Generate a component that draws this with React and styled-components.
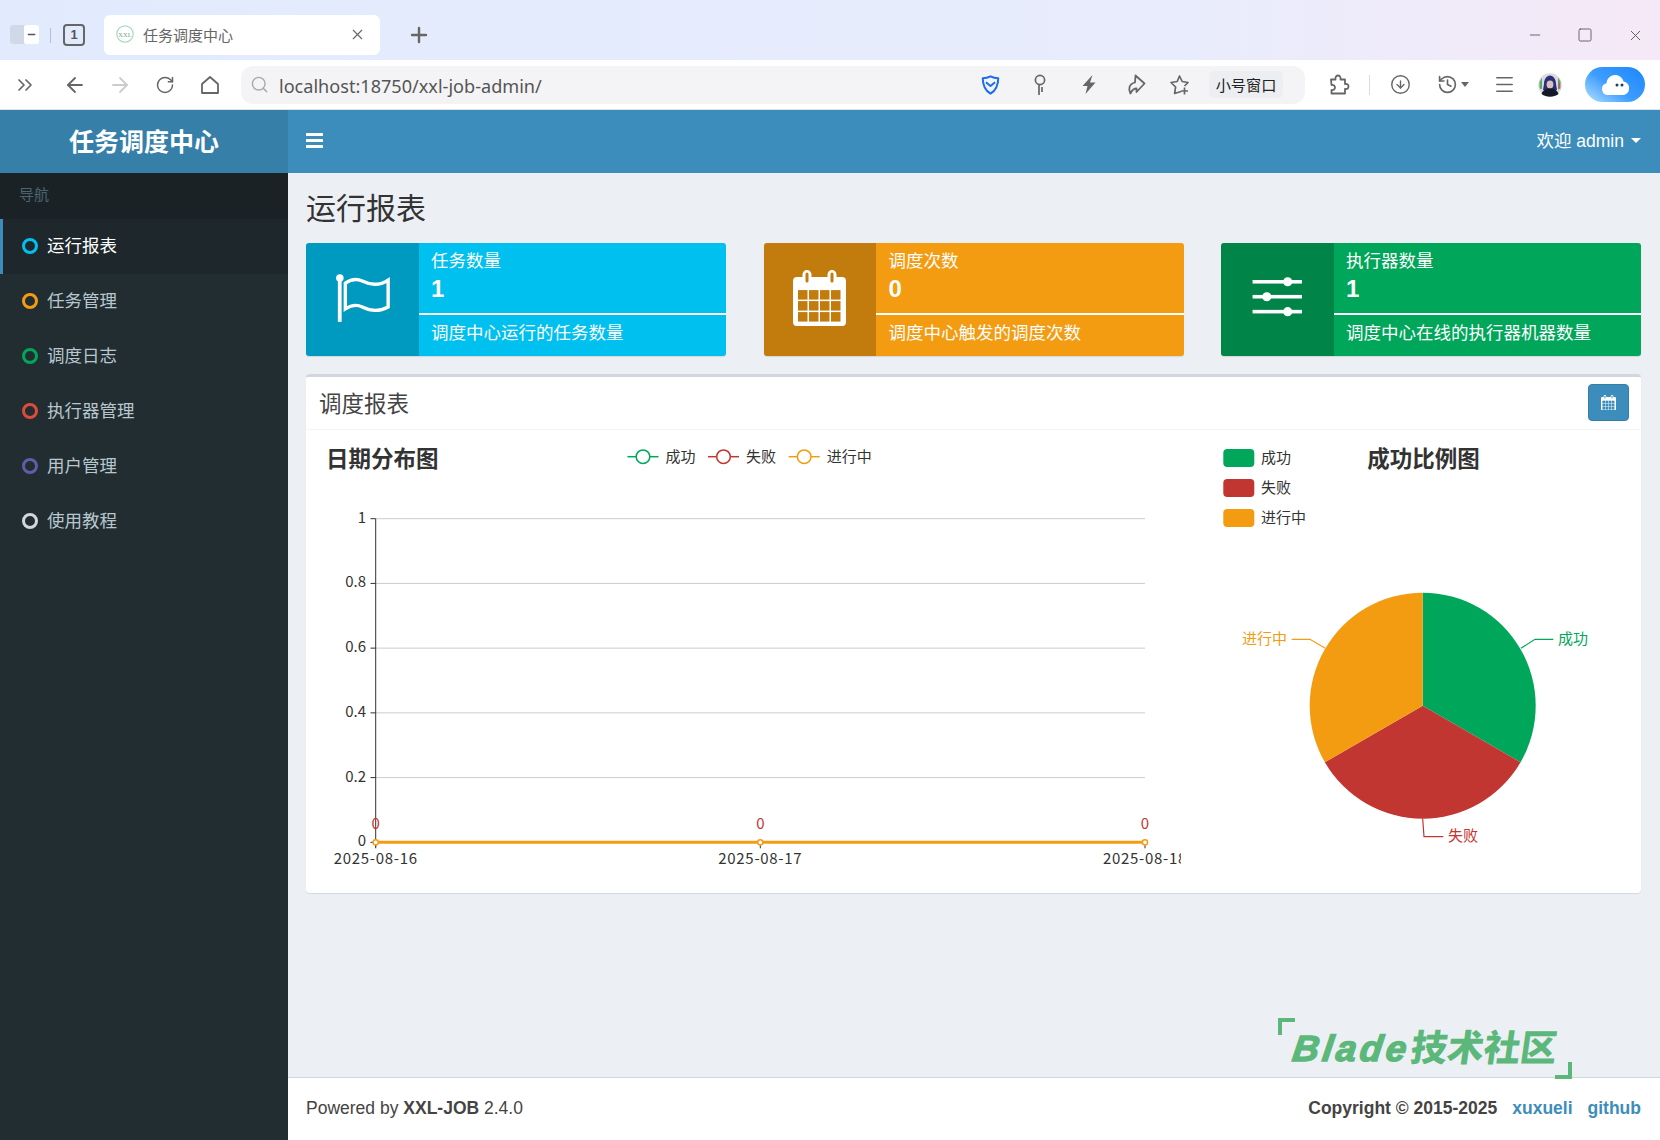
import React from 'react'
import styled, { createGlobalStyle } from 'styled-components'
import {
  ChevronsRight, ArrowLeft, ArrowRight, RotateCw, Search,
  CircleArrowDown, History, Menu, X, Plus, Minus, Square,
} from 'lucide-react'

const FONT = `"Liberation Sans", "Noto Sans CJK SC", sans-serif`
const CHART_FONT = `"Noto Sans CJK SC", "Noto Sans", sans-serif`

const GREEN = '#00a65a'
const RED = '#c23632'
const ORANGE = '#f39c12'

const GlobalStyle = createGlobalStyle`
  html, body {
    margin: 0;
    padding: 0;
    width: 1660px;
    height: 1140px;
    overflow: hidden;
    font-family: ${FONT};
    background: #ecf0f5;
  }
  * { box-sizing: border-box; }
`

const Page = styled.div`
  width: 1660px;
  height: 1140px;
  display: flex;
  flex-direction: column;
`

/* browser chrome */
const TabStrip = styled.div`
  height: 60px;
  display: flex;
  align-items: flex-start;
  padding-left: 10px;
  background: linear-gradient(90deg, #e1ebfd 0%, #e8ecfc 70%, #f6e9f7 100%);
`
const PanelToggle = styled.div`
  width: 29px;
  height: 19px;
  margin-top: 25px;
  padding-left: 14px;
  border-radius: 3px;
  background: #d0d9e8;
`
const PanelToggleInner = styled.div`
  width: 15px;
  height: 19px;
  display: flex;
  align-items: center;
  justify-content: center;
  border-radius: 2px;
  background: #fff;
  color: #555;
`
const StripDivider = styled.div`
  width: 1px;
  height: 15px;
  margin: 28px 12px 0 11px;
  background: #b4bfd0;
`
const TabCount = styled.div`
  width: 22px;
  height: 22px;
  margin-top: 24px;
  border: 2px solid #666;
  border-radius: 4px;
  font-size: 13px;
  line-height: 18px;
  text-align: center;
  font-weight: bold;
  color: #555;
`
const Tab = styled.div`
  width: 276px;
  height: 40px;
  margin: 15px 0 0 19px;
  padding: 0 14px 2px 12px;
  display: flex;
  align-items: center;
  border-radius: 6px;
  background: #fff;
`
const TabTitle = styled.span`
  flex: 1;
  margin-left: 9px;
  font-size: 15px;
  color: #666;
`
const NewTab = styled.div`
  margin: 23px 0 0 27px;
  color: #666;
  display: flex;
`
const WindowControls = styled.div`
  margin-left: auto;
  padding-top: 10px;
  display: flex;
  height: 60px;
  align-items: center;
`
const WindowButton = styled.div`
  width: 50px;
  display: flex;
  justify-content: center;
  color: #555;
`

const Toolbar = styled.div`
  height: 50px;
  display: flex;
  align-items: center;
  background: #fff;
  border-bottom: 1px solid #dfe3e8;
`
const IconCell = styled.div`
  width: ${(p) => p.$w}px;
  flex: none;
  display: flex;
  align-items: center;
  justify-content: center;
  color: ${(p) => p.$color || '#666'};
  margin-left: ${(p) => p.$ml || 0}px;
`
const AddressBar = styled.div`
  width: 1064px;
  height: 38px;
  margin-left: 11px;
  padding-right: 22px;
  display: flex;
  align-items: center;
  border-radius: 12px;
  background: #f4f4f6;
`
const UrlText = styled.span`
  flex: 1;
  padding: 2px 0 0 2px;
  font-family: "Noto Sans", sans-serif;
  font-size: 18.1px;
  color: #555;
`
const SmallWindowChip = styled.div`
  width: 74px;
  height: 27px;
  margin-left: 10px;
  border-radius: 5px;
  background: #eceef1;
  font-size: 15.2px;
  line-height: 29px;
  text-align: center;
  color: #222;
`
const ToolDivider = styled.div`
  width: 1px;
  height: 20px;
  margin-left: 5px;
  background: #dcdcdc;
`
const HistoryCaret = styled.span`
  margin-left: 3px;
  border-left: 4px solid transparent;
  border-right: 4px solid transparent;
  border-top: 5px solid #666;
`
const CloudPill = styled.div`
  width: 60px;
  height: 35px;
  margin-left: 19px;
  display: flex;
  align-items: center;
  justify-content: center;
  border-radius: 18px;
  background: linear-gradient(35deg, #b2e0ff 0%, #3d9dff 45%, #1c86fb 100%);
`

/* admin layout */
const Layout = styled.div`
  flex: 1;
  display: flex;
  min-height: 0;
`
const Sidebar = styled.aside`
  width: 288px;
  flex: none;
  background: #222d32;
`
const Logo = styled.div`
  height: 63px;
  display: flex;
  align-items: center;
  justify-content: center;
  padding-bottom: 4px;
  background: #367fa9;
  color: #fff;
  font-size: 25px;
  font-weight: bold;
`
const NavHeader = styled.div`
  height: 46px;
  padding-left: 19px;
  line-height: 44px;
  background: #1a2226;
  color: #4b646f;
  font-size: 15px;
`
const NavItem = styled.div`
  height: 55px;
  display: flex;
  align-items: center;
  padding: 0 0 5px 18.5px;
  border-left: 3px solid ${(p) => (p.$active ? '#3c8dbc' : 'transparent')};
  background: ${(p) => (p.$active ? '#1e282c' : 'transparent')};
  color: ${(p) => (p.$active ? '#fff' : '#b8c7ce')};
  font-size: 17.5px;
`
const NavRing = styled.span`
  width: 16px;
  height: 16px;
  margin: 3px 9.5px 0 0;
  flex: none;
  border-radius: 50%;
  border: 3px solid ${(p) => p.$color};
`

const Main = styled.main`
  position: relative;
  flex: 1;
  display: flex;
  flex-direction: column;
  min-width: 0;
`
const TopBar = styled.header`
  height: 63px;
  padding: 0 19px 3px 18px;
  display: flex;
  align-items: center;
  justify-content: space-between;
  background: #3c8dbc;
  color: #fff;
`
const UserMenu = styled.div`
  display: flex;
  align-items: center;
  padding-bottom: 2px;
  font-size: 17.5px;
`
const UserCaret = styled.span`
  margin: 2px 0 0 7px;
  border-left: 5px solid transparent;
  border-right: 5px solid transparent;
  border-top: 5px solid #fff;
`
const Content = styled.div`
  flex: 1;
  padding: 19px 19px 0 18px;
`
const PageTitle = styled.h1`
  margin: 0 0 18px;
  font-size: 30px;
  font-weight: 400;
  line-height: 34px;
  height: 33px;
  color: #333;
`
const InfoRow = styled.div`
  display: grid;
  grid-template-columns: repeat(3, 420px);
  column-gap: 37.5px;
  margin-bottom: 18px;
`
const InfoBox = styled.div`
  height: 113px;
  display: flex;
  border-radius: 3px;
  overflow: hidden;
  background: ${(p) => p.$color};
  color: #fff;
  box-shadow: 0 1px 1px rgba(0, 0, 0, 0.1);
`
const InfoIcon = styled.div`
  width: 112.5px;
  flex: none;
  display: flex;
  align-items: center;
  justify-content: center;
  padding-bottom: ${(p) => p.$lift || 0}px;
  background: rgba(0, 0, 0, 0.2);
`
const InfoBody = styled.div`
  flex: 1;
  padding-top: 6px;
`
const InfoTitle = styled.div`
  padding-left: 12.5px;
  font-size: 17.5px;
  line-height: 24px;
`
const InfoNumber = styled.div`
  padding-left: 12.5px;
  font-size: 24px;
  font-weight: bold;
  line-height: 32px;
`
const InfoLine = styled.div`
  height: 2px;
  margin-top: 8px;
  background: #fff;
`
const InfoDesc = styled.div`
  padding-left: 12.5px;
  font-size: 17.5px;
  line-height: 36px;
`

const Card = styled.section`
  height: 519px;
  border-top: 3px solid #d2d6de;
  border-radius: 4px;
  background: #fff;
  box-shadow: 0 1px 1px rgba(0, 0, 0, 0.1);
`
const CardHeader = styled.div`
  height: 53px;
  padding: 0 12px 0 13px;
  display: flex;
  align-items: center;
  justify-content: space-between;
  border-bottom: 1px solid #f4f4f4;
`
const CardTitle = styled.h3`
  margin: 0 0 3px;
  font-size: 22.5px;
  font-weight: 400;
  color: #444;
`
const DateButton = styled.button`
  width: 41px;
  height: 37px;
  padding: 0;
  margin-top: -1px;
  display: flex;
  align-items: center;
  justify-content: center;
  border: 1px solid #367fa9;
  border-radius: 4px;
  background: #3c8dbc;
`
const ChartRow = styled.div`
  height: 463px;
  display: flex;
  justify-content: space-between;
`
const ChartSvg = styled.svg`
  display: block;
  flex: none;
  font-family: ${CHART_FONT};
`

const Footer = styled.footer`
  height: 63px;
  padding: 0 19px 1px 18px;
  display: flex;
  align-items: center;
  justify-content: space-between;
  border-top: 1px solid #d2d6de;
  background: #fff;
  color: #444;
  font-size: 17.5px;
`
const FooterLink = styled.a`
  margin-left: 15px;
  color: #3c8dbc;
  text-decoration: none;
`

const Watermark = styled.div`
  position: absolute;
  left: 990px;
  top: 908px;
  width: 294px;
  height: 61px;
  color: #5cb87a;
  pointer-events: none;
`
const WatermarkCorner = styled.span`
  position: absolute;
  width: 17px;
  height: 17px;
  border: 0 solid #5cb87a;
  ${(p) => (p.$end
    ? 'right: 0; bottom: 0; border-width: 0 4px 4px 0;'
    : 'left: 0; top: 0; border-width: 4px 0 0 4px;')}
`
const WatermarkText = styled.div`
  position: absolute;
  left: 15px;
  top: 9px;
  white-space: nowrap;
  font-size: 36.5px;
  line-height: 44px;
  font-weight: 900;
  transform: skewX(-8deg);
`
const WatermarkLatin = styled.span`
  display: inline-block;
  width: 118px;
  font-family: "Liberation Sans", sans-serif;
  font-style: italic;
  font-weight: bold;
  letter-spacing: 3.5px;
  -webkit-text-stroke: 1.4px #5cb87a;
`

const FlagIcon = () => (
  <svg width="113" height="113" viewBox="0 0 113 113">
    <circle cx="34" cy="35" r="3.8" fill="#fff" />
    <rect x="32" y="35" width="3.8" height="44" fill="#fff" />
    <path d="M39.5 40c6-4 11-5 17-2 8 4 17 5 26-1v27c-9 5-18 4-26 0-6-3-11-2-17 2z"
      fill="none" stroke="#fff" strokeWidth="3.4" />
  </svg>
)

const CalendarIcon = ({ size = 53, hole }) => (
  <svg width={size} height={size * 1.06} viewBox="0 0 53 56">
    <rect x="0" y="7" width="53" height="49" rx="4" fill="#fff" />
    <rect x="9.5" y="0" width="9" height="15" rx="4.5" fill="#fff" />
    <rect x="34.5" y="0" width="9" height="15" rx="4.5" fill="#fff" />
    <rect x="12.5" y="2.5" width="3" height="10" rx="1.5" fill={hole} />
    <rect x="37.5" y="2.5" width="3" height="10" rx="1.5" fill={hole} />
    {[20, 31, 42].map((y) => [5, 16, 27, 38].map((x) => (
      <rect key={`${x}-${y}`} x={x} y={y} width="9.5" height="9.5" fill={hole} />
    )))}
  </svg>
)

const SlidersIcon = () => (
  <svg width="113" height="113" viewBox="0 0 113 113">
    {[[38.7, 67], [53.7, 46], [68.7, 67]].map(([y, x]) => (
      <g key={y} fill="#fff">
        <rect x="31.7" y={y - 1.8} width="49.6" height="3.6" />
        <circle cx={x} cy={y} r="4.6" />
      </g>
    ))}
  </svg>
)

const Favicon = () => (
  <svg width="18" height="18" viewBox="0 0 18 18">
    <circle cx="9" cy="9" r="8.2" fill="none" stroke="#a7dcc3" strokeWidth="1.2" />
    <text x="9" y="9" textAnchor="middle" dominantBaseline="central" fontSize="6.5" fontFamily="Liberation Serif, serif" fill="#7f9c8f">XXL</text>
  </svg>
)

const HomeIcon = () => (
  <svg width="20" height="20" viewBox="0 0 20 20" fill="none" stroke="#666" strokeWidth="1.8" strokeLinejoin="round">
    <path d="M2 9l8-7 8 7v9H2z" />
  </svg>
)

const ShieldIcon = () => (
  <svg width="19" height="20" viewBox="0 0 20 22" fill="none" stroke="#1a6cf0" strokeWidth="2.2" strokeLinejoin="round">
    <path d="M1.5 3.5C5 3.5 7.5 2.8 10 1.5c2.5 1.3 5 2 8.5 2 0 8-2 13-8.5 17C3.5 16.5 1.5 11.5 1.5 3.5z" />
    <path d="M5 8l5 4 5-4" />
  </svg>
)

const KeyIcon = () => (
  <svg width="14" height="22" viewBox="0 0 14 22" fill="none" stroke="#666" strokeWidth="1.7">
    <circle cx="7" cy="6" r="4.6" />
    <path d="M6 10.5V21M9 13v5" />
  </svg>
)

const BoltIcon = () => (
  <svg width="20" height="21" viewBox="0 0 20 21" fill="#666">
    <path d="M13.5 1L3.5 12h5L6.5 20 16.5 8.5h-5.5z" />
  </svg>
)

const ForwardIcon = () => (
  <svg width="20" height="21" viewBox="0 0 20 21" fill="none" stroke="#666" strokeWidth="1.8" strokeLinejoin="round">
    <path d="M9.500 1.500l9 8-8 8.500v-3.500C8 14.500 6 16 4.500 19.500 2 15 3 10 9 8.500z" />
  </svg>
)

const StarPlusIcon = () => (
  <svg width="20" height="20" viewBox="0 0 20 20" fill="none" stroke="#666" strokeWidth="1.7" strokeLinejoin="round">
    <path d="M12 16.5L5.600 18.500l1-6.500L2 7.500l6.200-1L10.500 1l2.700 5.500 5.800 1-3.500 3.500" />
    <path d="M15.500 12.500v7M12 16h7" />
  </svg>
)

const PuzzleIcon = () => (
  <svg width="21" height="21" viewBox="0 0 21 21" fill="none" stroke="#666" strokeWidth="1.8" strokeLinejoin="round">
    <path d="M2 5.500h4.500C6 3 7.500 1.500 9 1.500s3 1.500 2.500 4h4.500V10c2.500-.5 3.500 1 3.500 2.500S18.500 15.500 16 15v4.500H2.500V16c2 .5 3.500-1 3.500-2.500S4.500 10.500 2.500 11z" />
  </svg>
)

const AvatarIcon = () => (
  <svg width="24" height="24" viewBox="0 0 24 24">
    <circle cx="12" cy="12" r="11.8" fill="#dcdade" />
    <path d="M20 4.500l2.500 4v7l-2.500 1zM4 4.500L1.500 9v6.500L4 16z" fill="#5fa86b" />
    <path d="M20.500 9l1.500 2v4l-1.500 1z" fill="#c9565a" />
    <path d="M6 11c0-5 3-8.500 6-8.500s6 3.500 6 8.500l1 6H5z" fill="#2b2f7a" />
    <ellipse cx="12" cy="11.500" rx="3.400" ry="4" fill="#d9c2bd" />
    <path d="M3.500 21c1-3.500 4-5.500 8.500-5.500s7.500 2 8.500 5.500c-5 3.500-12 3.500-17 0z" fill="#161826" />
  </svg>
)

const CloudIcon = () => (
  <svg width="28" height="22" viewBox="0 0 28 22">
    <path d="M7 21a6 6 0 0 1-1.500-11.800C6 4 10 1 14 1s7.500 2.500 8.500 6.500A6.800 6.800 0 0 1 21 21z" fill="#fff" />
    <circle cx="16" cy="11" r="1.500" fill="#14406e" />
    <circle cx="21" cy="11" r="1.500" fill="#14406e" />
  </svg>
)

const BarsIcon = () => (
  <svg width="17" height="15" viewBox="0 0 17 15" fill="#fff">
    <rect y="0" width="17" height="3" rx="0.6" />
    <rect y="6" width="17" height="3" rx="0.6" />
    <rect y="12" width="17" height="3" rx="0.6" />
  </svg>
)

const NAV = [
  { label: '运行报表', color: '#00c0ef', active: true },
  { label: '任务管理', color: '#f39c12' },
  { label: '调度日志', color: '#00a65a' },
  { label: '执行器管理', color: '#dd4b39' },
  { label: '用户管理', color: '#605ca8' },
  { label: '使用教程', color: '#d2d6de' },
]

const BOXES = [
  { title: '任务数量', value: 1, desc: '调度中心运行的任务数量', color: '#00c0ef', icon: <FlagIcon /> },
  { title: '调度次数', value: 0, desc: '调度中心触发的调度次数', color: '#f39c12', lift: 3, icon: <CalendarIcon hole="#c27c0e" /> },
  { title: '执行器数量', value: 1, desc: '调度中心在线的执行器机器数量', color: '#00a65a', icon: <SlidersIcon /> },
]

const X_POINTS = [
  { x: 69.7, label: '2025-08-16' },
  { x: 454.3, label: '2025-08-17' },
  { x: 839, label: '2025-08-18' },
]
const Y_TICKS = ['1', '0.8', '0.6', '0.4', '0.2', '0']
const TOP_Y = 88.7
const BASE_Y = 412.3
const STEP = (BASE_Y - TOP_Y) / 5

const LEGEND = [
  { label: '成功', color: GREEN, x: 321.5 },
  { label: '失败', color: RED, x: 402 },
  { label: '进行中', color: ORANGE, x: 482.7 },
]

const LineChart = () => (
  <ChartSvg width="875" height="463" viewBox="0 0 875 463">
    <text x="20" y="26.5" dominantBaseline="central" fontSize="22.5" fontWeight="700" fill="#333">日期分布图</text>
    {LEGEND.map((l) => (
      <g key={l.label}>
        <line x1={l.x} x2={l.x + 31} y1="26.7" y2="26.7" stroke={l.color} strokeWidth="1.5" />
        <circle cx={l.x + 15.5} cy="26.7" r="6.8" fill="#fff" stroke={l.color} strokeWidth="1.5" />
        <text x={l.x + 38} y="25.5" dominantBaseline="central" fontSize="15" fill="#333">{l.label}</text>
      </g>
    ))}
    {Y_TICKS.map((t, i) => {
      const y = TOP_Y + STEP * i
      return (
        <g key={t}>
          {i < 5 && <line x1="69.7" x2="839" y1={y} y2={y} stroke="#ccc" strokeWidth="1" />}
          <line x1="64.5" x2="69.7" y1={y} y2={y} stroke="#333" strokeWidth="1" />
          <text x="60" y={y - 2.5} textAnchor="end" dominantBaseline="central" fontSize="15" fill="#333">{t}</text>
        </g>
      )
    })}
    <line x1="69.7" x2="69.7" y1={TOP_Y} y2={BASE_Y + 5} stroke="#333" strokeWidth="1" />
    {X_POINTS.map((p) => (
      <g key={p.label}>
        <line x1={p.x} x2={p.x} y1={BASE_Y} y2={BASE_Y + 6} stroke="#333" strokeWidth="1" />
        <text x={p.x} y="427.5" textAnchor="middle" dominantBaseline="central" fontSize="15" letterSpacing="0.7" fill="#333">{p.label}</text>
        <text x={p.x} y="392" textAnchor="middle" dominantBaseline="central" fontSize="15" fill={RED}>0</text>
      </g>
    ))}
    <line x1="69.7" x2="839" y1={BASE_Y} y2={BASE_Y} stroke={ORANGE} strokeWidth="3" />
    {X_POINTS.map((p) => (
      <circle key={p.x} cx={p.x} cy={BASE_Y} r="2.6" fill="#fff" stroke={ORANGE} strokeWidth="1.5" />
    ))}
  </ChartSvg>
)

const PIE_LEGEND = [
  { label: '成功', color: GREEN, y: 19 },
  { label: '失败', color: RED, y: 49 },
  { label: '进行中', color: ORANGE, y: 79 },
]

const PieChart = () => (
  <ChartSvg width="438" height="463" viewBox="0 0 438 463">
    {PIE_LEGEND.map((l) => (
      <g key={l.label}>
        <rect x="20.3" y={l.y} width="31" height="18" rx="4" fill={l.color} />
        <text x="58" y={l.y + 7} dominantBaseline="central" fontSize="15" fill="#333">{l.label}</text>
      </g>
    ))}
    <text x="164.3" y="26.5" dominantBaseline="central" fontSize="22.5" fontWeight="700" fill="#333">成功比例图</text>
    <path d="M219.7 275.7V162.7A113 113 0 0 1 317.56 332.2Z" fill={GREEN} />
    <path d="M219.7 275.7L317.56 332.2A113 113 0 0 1 121.84 332.2Z" fill={RED} />
    <path d="M219.7 275.7L121.84 332.2A113 113 0 0 1 219.7 162.7Z" fill={ORANGE} />
    <polyline points="318,218.3 332,209.3 350.3,209.3" fill="none" stroke={GREEN} strokeWidth="1.2" />
    <text x="355" y="207" dominantBaseline="central" fontSize="15" fill={GREEN}>成功</text>
    <polyline points="122.3,218.3 107,209.3 88.7,209.3" fill="none" stroke={ORANGE} strokeWidth="1.2" />
    <text x="84" y="207" textAnchor="end" dominantBaseline="central" fontSize="15" fill={ORANGE}>进行中</text>
    <polyline points="219.7,388.7 221,406.7 240.3,406.7" fill="none" stroke={RED} strokeWidth="1.2" />
    <text x="245" y="404" dominantBaseline="central" fontSize="15" fill={RED}>失败</text>
  </ChartSvg>
)

const App = () => (
  <Page>
    <GlobalStyle />
    <TabStrip>
      <PanelToggle>
        <PanelToggleInner><Minus size={11} strokeWidth={3} /></PanelToggleInner>
      </PanelToggle>
      <StripDivider />
      <TabCount>1</TabCount>
      <Tab>
        <Favicon />
        <TabTitle>任务调度中心</TabTitle>
        <X size={17} color="#666" strokeWidth={1.6} />
      </Tab>
      <NewTab><Plus size={24} strokeWidth={2.4} /></NewTab>
      <WindowControls>
        <WindowButton><Minus size={16} strokeWidth={1.3} /></WindowButton>
        <WindowButton><Square size={16} strokeWidth={1.3} /></WindowButton>
        <WindowButton><X size={17} strokeWidth={1.3} /></WindowButton>
      </WindowControls>
    </TabStrip>

    <Toolbar>
      <IconCell $w={50}><ChevronsRight size={24} strokeWidth={1.7} /></IconCell>
      <IconCell $w={50}><ArrowLeft size={24} strokeWidth={1.8} /></IconCell>
      <IconCell $w={40} $color="#ccc"><ArrowRight size={24} strokeWidth={1.8} /></IconCell>
      <IconCell $w={50}><RotateCw size={20} strokeWidth={1.8} /></IconCell>
      <IconCell $w={40}><HomeIcon /></IconCell>
      <AddressBar>
        <IconCell $w={36} $color="#aaa"><Search size={19} strokeWidth={1.8} /></IconCell>
        <UrlText>localhost:18750/xxl-job-admin/</UrlText>
        <IconCell $w={49}><ShieldIcon /></IconCell>
        <IconCell $w={50}><KeyIcon /></IconCell>
        <IconCell $w={48}><BoltIcon /></IconCell>
        <IconCell $w={46}><ForwardIcon /></IconCell>
        <IconCell $w={40}><StarPlusIcon /></IconCell>
        <SmallWindowChip>小号窗口</SmallWindowChip>
      </AddressBar>
      <IconCell $w={50} $ml={9}><PuzzleIcon /></IconCell>
      <ToolDivider />
      <IconCell $w={60}><CircleArrowDown size={21} strokeWidth={1.6} /></IconCell>
      <IconCell $w={46}><History size={21} strokeWidth={1.9} /><HistoryCaret /></IconCell>
      <IconCell $w={57}><Menu size={23} strokeWidth={1.7} /></IconCell>
      <IconCell $w={33}><AvatarIcon /></IconCell>
      <CloudPill><CloudIcon /></CloudPill>
    </Toolbar>

    <Layout>
      <Sidebar>
        <Logo>任务调度中心</Logo>
        <NavHeader>导航</NavHeader>
        {NAV.map((item) => (
          <NavItem key={item.label} $active={item.active}>
            <NavRing $color={item.color} />
            {item.label}
          </NavItem>
        ))}
      </Sidebar>

      <Main>
        <TopBar>
          <BarsIcon />
          <UserMenu>欢迎 admin<UserCaret /></UserMenu>
        </TopBar>
        <Content>
          <PageTitle>运行报表</PageTitle>
          <InfoRow>
            {BOXES.map((box) => (
              <InfoBox key={box.title} $color={box.color}>
                <InfoIcon $lift={box.lift}>{box.icon}</InfoIcon>
                <InfoBody>
                  <InfoTitle>{box.title}</InfoTitle>
                  <InfoNumber>{box.value}</InfoNumber>
                  <InfoLine />
                  <InfoDesc>{box.desc}</InfoDesc>
                </InfoBody>
              </InfoBox>
            ))}
          </InfoRow>
          <Card>
            <CardHeader>
              <CardTitle>调度报表</CardTitle>
              <DateButton><CalendarIcon size={15} hole="#3c8dbc" /></DateButton>
            </CardHeader>
            <ChartRow>
              <LineChart />
              <PieChart />
            </ChartRow>
          </Card>
        </Content>
        <Footer>
          <span>Powered by <b>XXL-JOB</b> 2.4.0</span>
          <b>
            Copyright © 2015-2025
            <FooterLink href="#">xuxueli</FooterLink>
            <FooterLink href="#">github</FooterLink>
          </b>
        </Footer>
        <Watermark>
          <WatermarkCorner />
          <WatermarkText><WatermarkLatin>Blade</WatermarkLatin>技术社区</WatermarkText>
          <WatermarkCorner $end />
        </Watermark>
      </Main>
    </Layout>
  </Page>
)

export default App
